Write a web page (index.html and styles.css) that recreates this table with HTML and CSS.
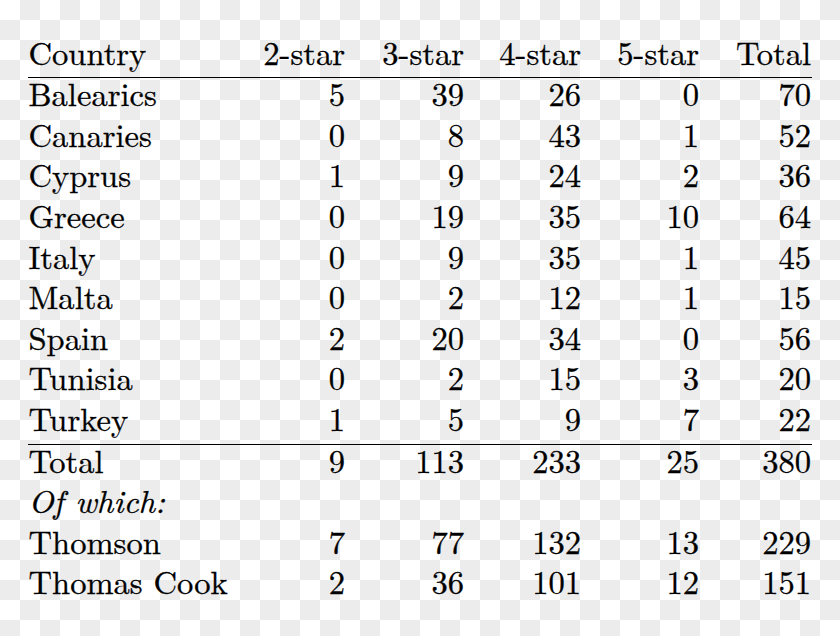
FILE: index.html
```html
<!DOCTYPE html>
<html lang="en">
<head>
<meta charset="utf-8">
<title>Hotels by country</title>
<link rel="stylesheet" href="styles.css">
</head>
<body>
<div class="sheet">
  <div class="row head">
    <div class="label">Country</div>
    <div class="num">2-star</div>
    <div class="num">3-star</div>
    <div class="num">4-star</div>
    <div class="num">5-star</div>
    <div class="num">Total</div>
  </div>
  <div class="rule"></div>
  <div class="row"><div class="label">Balearics</div><div class="num">5</div><div class="num">39</div><div class="num">26</div><div class="num">0</div><div class="num">70</div></div>
  <div class="row"><div class="label">Canaries</div><div class="num">0</div><div class="num">8</div><div class="num">43</div><div class="num">1</div><div class="num">52</div></div>
  <div class="row"><div class="label">Cyprus</div><div class="num">1</div><div class="num">9</div><div class="num">24</div><div class="num">2</div><div class="num">36</div></div>
  <div class="row"><div class="label">Greece</div><div class="num">0</div><div class="num">19</div><div class="num">35</div><div class="num">10</div><div class="num">64</div></div>
  <div class="row"><div class="label">Italy</div><div class="num">0</div><div class="num">9</div><div class="num">35</div><div class="num">1</div><div class="num">45</div></div>
  <div class="row"><div class="label">Malta</div><div class="num">0</div><div class="num">2</div><div class="num">12</div><div class="num">1</div><div class="num">15</div></div>
  <div class="row"><div class="label">Spain</div><div class="num">2</div><div class="num">20</div><div class="num">34</div><div class="num">0</div><div class="num">56</div></div>
  <div class="row"><div class="label">Tunisia</div><div class="num">0</div><div class="num">2</div><div class="num">15</div><div class="num">3</div><div class="num">20</div></div>
  <div class="row"><div class="label">Turkey</div><div class="num">1</div><div class="num">5</div><div class="num">9</div><div class="num">7</div><div class="num">22</div></div>
  <div class="rule"></div>
  <div class="row"><div class="label">Total</div><div class="num">9</div><div class="num">113</div><div class="num">233</div><div class="num">25</div><div class="num">380</div></div>
  <div class="row"><div class="label italic">Of which:</div></div>
  <div class="row"><div class="label">Thomson</div><div class="num">7</div><div class="num">77</div><div class="num">132</div><div class="num">13</div><div class="num">229</div></div>
  <div class="row"><div class="label">Thomas Cook</div><div class="num">2</div><div class="num">36</div><div class="num">101</div><div class="num">12</div><div class="num">151</div></div>
</div>
</body>
</html>
```
FILE: styles.css
```css
html, body {
  margin: 0;
  padding: 0;
}
html {
  min-height: 100%;
  background: repeating-conic-gradient(#ececec 0 25%, #ffffff 0 50%) 0 0 / 40px 40px;
}
body {
  font-family: "Latin Modern Roman", "CMU Serif", "Liberation Serif", serif;
  font-size: 32.6px;
  color: #000;
  -webkit-text-stroke: 0.3px #000;
}
.sheet {
  width: 784px;
  margin-left: 28px;
  padding-top: 36.6px;
}
.row {
  display: grid;
  grid-template-columns: 200px 117px 119px 117px 118px 112px;
  padding-right: 1px;
  height: 40.6px;
  box-sizing: border-box;
  padding-bottom: 11px;
  line-height: 29.6px;
}
.row.head {
  padding-bottom: 12px;
  line-height: 28.6px;
}
.label {
  padding-left: 0.5px;
  white-space: nowrap;
}
.label.italic {
  font-style: italic;
}
.num {
  text-align: right;
  white-space: nowrap;
}
.rule {
  height: 1px;
  background: #000;
}
```
